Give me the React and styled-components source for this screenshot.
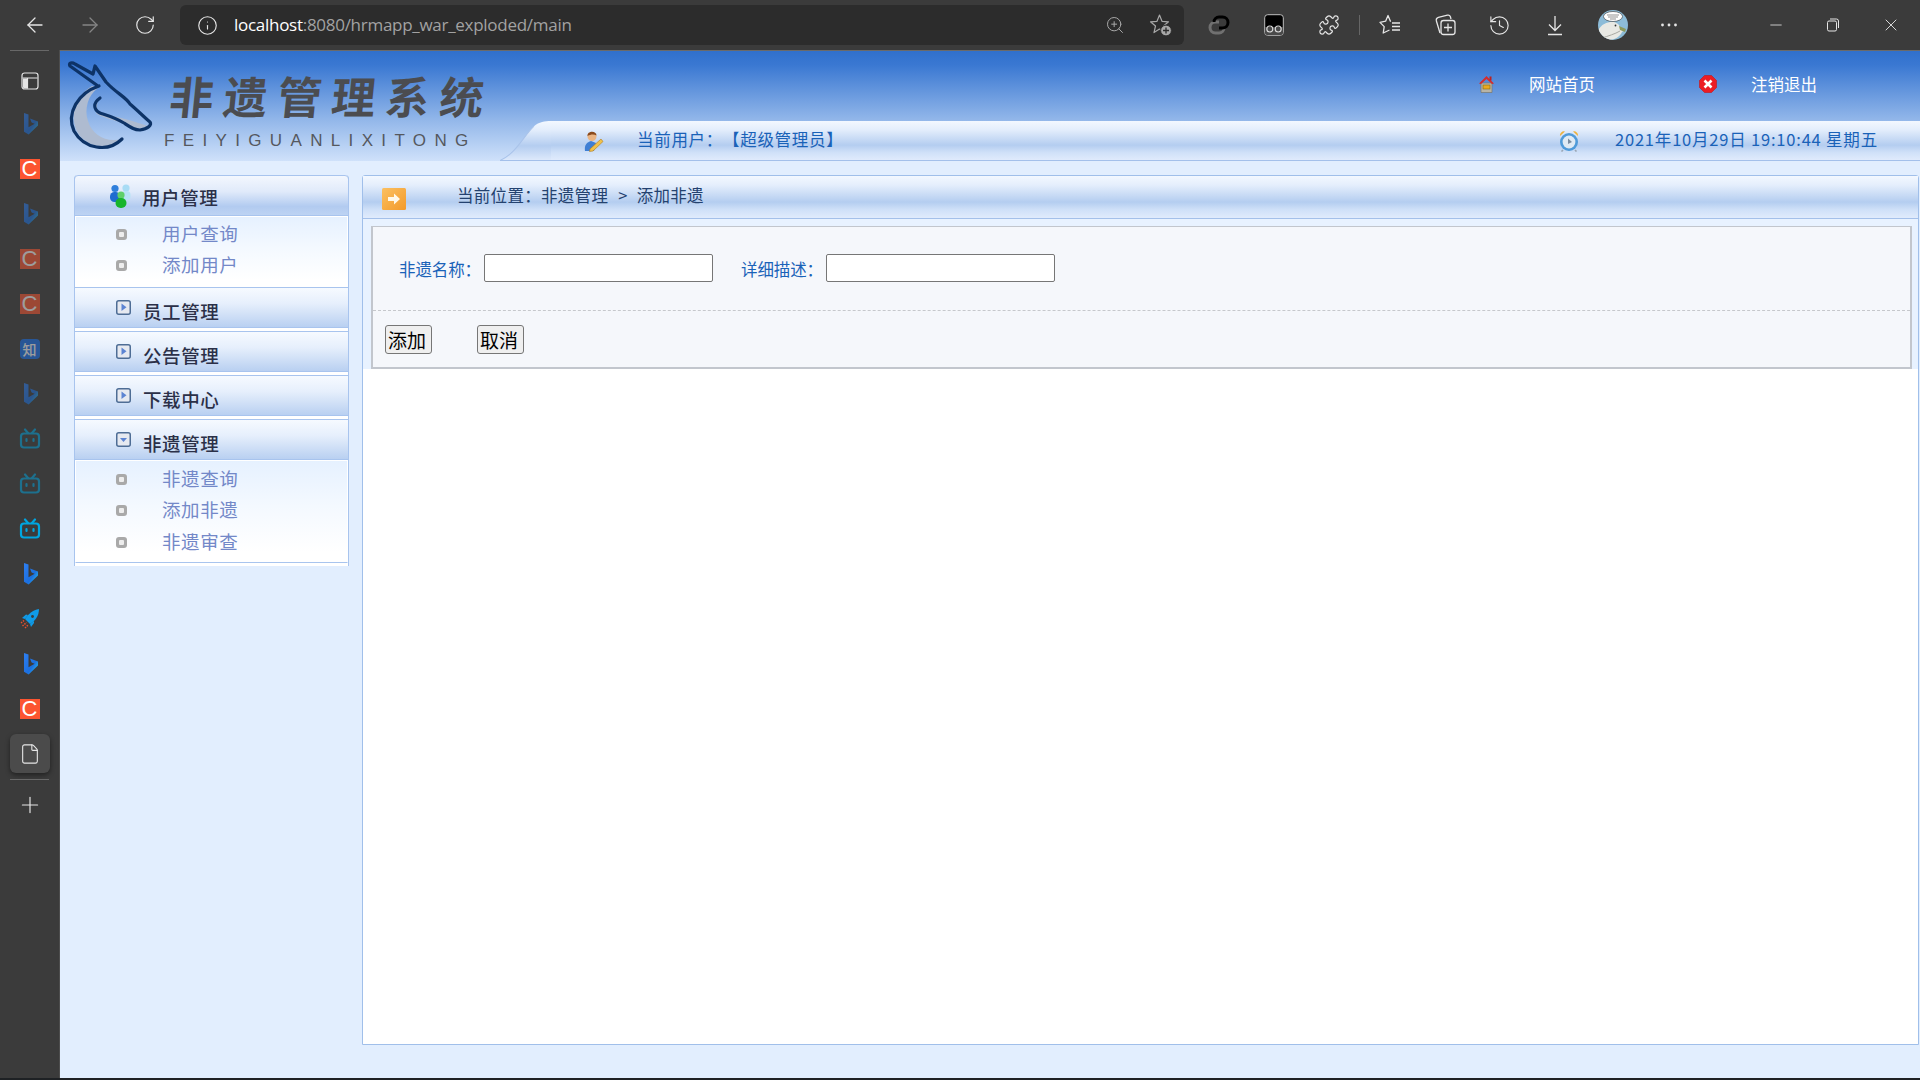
import React from 'react';
import styled, { createGlobalStyle } from 'styled-components';
import { ArrowLeft, ArrowRight, RotateCw, Info, ZoomIn, History, Minus, X, Plus, File, Puzzle } from 'lucide-react';

const Global = createGlobalStyle`
  html, body { margin: 0; padding: 0; background: #1e2124; }
  * { box-sizing: border-box; }
  #root { width: 1920px; height: 1080px; overflow: hidden; }
`;

const CJK = `"Noto Sans CJK SC", "Noto Sans", sans-serif`;
const bandGradient = `linear-gradient(#f3f8ff 0%, #e4eefc 22%, #b4cdf0 62%, #cfe0f8 80%, #e0ebfc 100%)`;

const Shell = styled.div`
  width: 1920px; height: 1080px; display: flex; flex-direction: column;
  background: #3b3b3b; font-family: ${CJK}; text-spacing-trim: space-all;
`;
const TopBar = styled.div`
  height: 50px; flex: none; display: flex; align-items: center; padding-left: 7px; color: #e8e8e8;
`;
const Slot = styled.div`
  flex: none; width: ${p => p.$w || 55}px; height: 40px; display: flex; align-items: center; justify-content: center;
  color: ${p => p.$dim ? '#858585' : '#e6e6e6'}; margin-left: ${p => p.$ml || 0}px;
`;
const AddressBar = styled.div`
  flex: none; width: 1004px; height: 40px; margin: 0 7px 0 8px; background: #2c2c2c; border-radius: 6px;
  display: flex; align-items: center; padding-left: 17px; color: #b5b5b5;
`;
const UrlText = styled.div`
  margin: 0 0 2px 16px; flex: 1; font: 17px "Open Sans", "Noto Sans", sans-serif; letter-spacing: -0.28px; color: #a2a2a2;
  b { font-weight: 400; color: #fff; }
`;
const AddrIcon = styled.div`
  flex: none; width: 46px; display: flex; justify-content: center; color: #a8a8a8;
`;
const ToolDivider = styled.div`
  flex: none; width: 1px; height: 20px; margin: 0 2px 0 3px; background: #666;
`;
const Below = styled.div`
  flex: 1; display: flex; min-height: 0;
`;
const Rail = styled.div`
  flex: none; width: 60px; display: flex; flex-direction: column; align-items: center;
  border-right: 1px solid #4d4d4d;
`;
const RailLine = styled.div`
  flex: none; width: 39px; height: 1px; background: #686868; margin-right: 1px;
`;
const RailItem = styled.div`
  flex: none; width: 40px; height: ${p => p.$active ? 39 : 45}px; display: flex; align-items: center; justify-content: center;
  margin-top: ${p => p.$active ? 3 : p.$last ? 2 : 0}px;
  margin-bottom: ${p => p.$first ? -2 : p.$active ? 6 : 0}px;
  opacity: ${p => p.$faded ? 0.5 : 1};
  color: #e6e6e6;
  border-radius: 6px;
  background: ${p => p.$active ? '#4b4b4b' : 'transparent'};
  box-shadow: ${p => p.$active ? '0 2px 5px rgba(0,0,0,.45)' : 'none'};
`;
const RailTop = styled.div`flex: none; height: 7px;`;
const CTile = styled.div`
  width: 20px; height: 20px; background: #fc5531; color: #fff; font: 400 22px/20px "Liberation Sans", sans-serif; text-align: center;
`;
const ZhiTile = styled.div`
  width: 20px; height: 20px; background: #1772f0; border-radius: 4px; color: #fff; font: 500 14px/20px ${CJK}; text-align: center;
`;
const Page = styled.div`
  flex: 1; display: flex; flex-direction: column; background: #e2eefe; border-top: 1px solid #6a6a6a; min-width: 0;
`;
const Banner = styled.div`
  flex: none; height: 110px; display: flex;
  background: linear-gradient(#3070cc 0, #3a78d2 14px, #94b8ea 70px, #cfe1fa 110px);
`;
const LogoArea = styled.div`
  flex: none; width: 440px; display: flex; padding-left: 2px;
`;
const LogoText = styled.div`
  display: flex; flex-direction: column; margin-top: 14px; margin-left: 2px;
`;
const LogoTitle = styled.div`
  font: 700 44px/60px ${CJK}; letter-spacing: 10px; color: #4b4c50; white-space: nowrap; padding-left: 6px;
  transform: skewX(-6deg);
`;
const LogoPinyin = styled.div`
  font: 400 17px/20px "Liberation Sans", sans-serif; letter-spacing: 8.35px; color: #55585e; margin-top: 6px; white-space: nowrap;
`;
const BannerRight = styled.div`
  flex: 1; display: flex; flex-direction: column; min-width: 0;
`;
const TopLinks = styled.div`
  flex: none; height: 70px; display: flex; align-items: center; padding: 0 0 4px 978px;
`;
const TopLink = styled.div`
  color: #fff; font-size: 16.5px; white-space: nowrap; flex: none; width: ${p => p.$w}px; margin-left: ${p => p.$ml}px;
`;
const BandRow = styled.div`
  flex: 1; display: flex; min-height: 0;
`;
const Band = styled.div`
  flex: 1; display: flex; align-items: center; background: ${bandGradient}; border-bottom: 1px solid #a4c0ea;
  color: #1a62b8; font-size: 16.5px; white-space: nowrap; padding-left: 31px;
`;
const BandText = styled.div`
  margin-left: ${p => p.$ml}px; flex: none; margin-top: -3px; width: ${p => p.$w ? `${p.$w}px` : 'auto'};
  letter-spacing: ${p => p.$ls || 0}px;
`;
const Body = styled.div`
  flex: 1; display: flex; padding: 14px 1px 33px 14px; gap: 13px; min-height: 0;
`;
const Menu = styled.div`
  flex: none; width: 275px; align-self: flex-start; background: #fff; padding-bottom: 3px;
  border: solid #a8c4ee; border-width: 0 1px 0 1px; border-radius: 4px 4px 0 0;
`;
const MenuHead = styled.div`
  height: ${p => p.$h || 41}px; margin: 0 -1px ${p => p.$gap || 0}px; padding-left: 41px; display: flex; align-items: center;
  border: 1px solid #a8c4ee; border-radius: ${p => p.$first ? '4px 4px 0 0' : '0'};
  background: ${p => p.$first ? 'linear-gradient(#f3f7fe 0%, #e0eafa 40%, #b2cbf0 78%, #bdd3f3 100%)' : 'linear-gradient(#f6faff 0%, #e6effc 40%, #b9d0f1 100%)'};
  font-size: 18.5px; letter-spacing: 0.6px; color: #2b3048; white-space: nowrap;
`;
const HeadLabel = styled.span`
  margin-left: ${p => p.$ml ?? 12}px; margin-top: ${p => p.$mt ?? 6}px; font-weight: 500;
`;
const HeadIcon = styled.div`
  flex: none; display: flex; margin-bottom: ${p => p.$mb ?? 1}px; margin-left: ${p => p.$mx || 0}px;
`;
const SubList = styled.div`
  padding: ${p => p.$closing ? '1px 0 5px 40px' : '0 0 7px 40px'};
  background: linear-gradient(#e6f1ff 0%, #f4f9ff 45%, #fff 90%);
  border: solid #fff; border-width: 1px 1px 0;
  ${p => p.$closing ? 'border-bottom: 1px solid #a8c4ee;' : ''}
`;
const SubItem = styled.div`
  height: 31.5px; display: flex; align-items: center; gap: 35px; color: #7388c8; font-size: 18.5px; letter-spacing: 0.6px;
`;
const Bullet = styled.span`
  flex: none; width: 11px; height: 11px; margin-top: 3px; border-radius: 3px; background: #a9a9a9; display: flex; align-items: center; justify-content: center;
  &::after { content: ''; width: 5px; height: 5px; background: #ededed; border-radius: 1px; }
`;
const Main = styled.div`
  flex: 1; min-width: 0; display: flex; flex-direction: column; background: #fff;
  border: 1px solid #a0bfea; border-radius: 3px 3px 0 0;
`;
const Crumb = styled.div`
  flex: none; height: 43px; display: flex; align-items: center; padding-left: 19px;
  background: ${bandGradient}; border-bottom: 1px solid #a4c0ea;
  color: #24426f; font-size: 16.5px; letter-spacing: .3px; white-space: nowrap;
`;
const CrumbText = styled.div`margin-left: 51px; margin-top: -4px;`;
const CrumbSep = styled.span`margin: 0 9px 0 10px;`;
const CrumbIcon = styled.div`flex: none; display: flex; margin-top: 4px;`;
const FormWrap = styled.div`
  flex: none; padding: 7px 6px 0 8px; background: #e8f2ff;
`;
const Form = styled.div`
  height: 143px; background: #f5f7fb; border: 2px solid #c2c6cd; border-width: 1px 2px 2px 2px; display: flex; flex-direction: column;
`;
const Fields = styled.div`
  flex: none; height: 84px; display: flex; align-items: center; border-bottom: 1px dashed #c6c8cc; padding: 0 0 1px 26px;
`;
const FieldLabel = styled.label`
  flex: none; width: 85px; color: #1a62b8; font-size: 16.5px; letter-spacing: -0.1px; white-space: nowrap; margin-top: 1px;
`;
const TextInput = styled.input`
  flex: none; width: 229px; height: 28px; background: #fff; border: 1px solid #767676; border-radius: 2px; margin-right: 28px; padding: 0;
`;
const Actions = styled.div`
  flex: 1; display: flex; align-items: flex-start; gap: 45px; padding: 14px 0 0 12px;
`;
const Btn = styled.button`
  flex: none; width: 47px; height: 29px; padding: 0 3px 0 0; background: #efefef; border: 1px solid #767676; border-radius: 3px;
  font: 400 19px/26px ${CJK}; color: #000;
`;
const BottomStrip = styled.div`
  flex: none; height: 2px; background: #1e2124;
`;

const Bing = () => (
  <svg width="20" height="24" viewBox="0 0 20 24">
    <defs>
      <linearGradient id="bing" x1="0" y1="0" x2="1" y2="1">
        <stop offset="0" stopColor="#2f7ff0" /><stop offset="0.6" stopColor="#1b6fe0" /><stop offset="1" stopColor="#2fd0e8" />
      </linearGradient>
    </defs>
    <path d="M4 1 L8.5 2.6 V15.2 L14.6 11.8 L11.6 10.4 L10 6.6 L18 9.4 V13.4 L8.6 22.6 L4 19.8 Z" fill="url(#bing)" />
  </svg>
);
const Bili = () => (
  <svg width="22" height="22" viewBox="0 0 22 22" fill="none" stroke="#00a6e0" strokeWidth="2.2">
    <rect x="2" y="5.5" width="18" height="14" rx="3" />
    <path d="M6 1.5 L9 5 M16 1.5 L13 5" strokeLinecap="round" />
    <path d="M7.5 11v2 M14.5 11v2" strokeLinecap="round" />
  </svg>
);
const Rocket = () => (
  <svg width="22" height="22" viewBox="0 0 22 22">
    <path d="M20 1 C14 2 9 6 6 11 L11 16 C16 13 20 8 20 1 Z" fill="#0f9be8" />
    <path d="M6 11 L3 10 L7 6.5 L9 7 Z M11 16 L12 19 L15 15 L15 13 Z" fill="#0f9be8" />
    <circle cx="13.5" cy="8.5" r="1.4" fill="#3b3b3b" />
    <path d="M2 15 L5 12.5 M3.5 18 L7.5 14.5 M6 20 L9 17" stroke="#e9502e" strokeWidth="1.4" strokeDasharray="1.5 1" />
  </svg>
);
const PanelIcon = () => (
  <svg width="18" height="18" viewBox="0 0 18 18">
    <rect x="1" y="1" width="16" height="16" rx="2.5" fill="#3b3b3b" stroke="#e6e6e6" strokeWidth="1.2" />
    <path d="M1.5 6h15 M6.5 6v10.5" stroke="#e6e6e6" strokeWidth="1.2" />
    <path d="M2 6.5h4.5v10H3.5A1.5 1.5 0 0 1 2 15Z" fill="#e6e6e6" />
  </svg>
);
const LinkBlob = () => (
  <svg width="22" height="22" viewBox="0 0 22 22" fill="none" strokeWidth="3">
    <path d="M11 8 H7.5 a5 5 0 0 0 0 11 h3.5 a5 5 0 0 0 5 -5" stroke="#707070" />
    <path d="M11 14 h3.5 a5 5 0 0 0 0 -11 h-3.5 a5 5 0 0 0 -5 5" stroke="#000" />
  </svg>
);
const Glasses = () => (
  <svg width="20" height="22" viewBox="0 0 20 22" fill="none">
    <rect x="0.7" y="0.7" width="18.6" height="20.6" rx="3" fill="#000" stroke="#bdbdbd" strokeWidth="1" />
    <path d="M1 13 H19 V18 a3 3 0 0 1 -3 3 H4 a3 3 0 0 1 -3 -3 Z" fill="#4a4a4a" />
    <circle cx="5.8" cy="15" r="3" stroke="#dcdcdc" strokeWidth="1.1" />
    <circle cx="14.2" cy="15" r="3" stroke="#dcdcdc" strokeWidth="1.1" />
  </svg>
);
const StarPlus = () => (
  <svg width="24" height="24" viewBox="0 0 24 24" fill="none" stroke="#a8a8a8" strokeWidth="1.2">
    <path d="M10.5 2 L13 8.3 L19.5 8.8 L14.6 13 L16 19.4 L10.5 16 L5 19.6 L6.5 13 L1.5 8.8 L8 8.3 Z" strokeLinejoin="round" />
    <circle cx="17" cy="17.5" r="5.4" fill="#a8a8a8" stroke="#2c2c2c" strokeWidth="1" />
    <path d="M17 14.5 v6 M14 17.5 h6" stroke="#2c2c2c" strokeWidth="1.3" />
  </svg>
);
const FavList = () => (
  <svg width="24" height="24" viewBox="0 0 24 24" fill="none" stroke="#e6e6e6" strokeWidth="1.3" strokeLinejoin="round">
    <path d="M13 8.2 L12.4 8.2 L10 2.5 L7.6 8.2 L2 9.4 L6.2 13.6 L5.2 20 L11.5 17" />
    <path d="M14 10 h8 M14 13.5 h8 M14 17 h8" />
  </svg>
);
const Collections = () => (
  <svg width="24" height="24" viewBox="0 0 24 24" fill="none" stroke="#e6e6e6" strokeWidth="1.3">
    <path d="M7 20 L3.4 8 a3 3 0 0 1 2 -3.6 l9 -2.2 a2.5 2.5 0 0 1 3 1.6 L18 6" />
    <rect x="8" y="7.5" width="14" height="14" rx="2.5" fill="#3b3b3b" />
    <path d="M15 10.5 v8 M11 14.5 h8" />
  </svg>
);
const DownloadIcon = () => (
  <svg width="20" height="24" viewBox="0 0 20 24" fill="none" stroke="#e6e6e6" strokeWidth="1.3">
    <path d="M10 3 v14 M4 11.5 L10 17.5 L16 11.5 M3 21.5 h14" />
  </svg>
);
const Dots = () => (
  <svg width="18" height="4" viewBox="0 0 18 4" fill="#e6e6e6">
    <circle cx="2.5" cy="2" r="1.4" /><circle cx="9" cy="2" r="1.4" /><circle cx="15.5" cy="2" r="1.4" />
  </svg>
);
const Restore = () => (
  <svg width="14" height="14" viewBox="0 0 14 14" fill="none" stroke="#e6e6e6" strokeWidth="1">
    <rect x="1.5" y="3" width="9" height="10" rx="1.5" />
    <path d="M4 1 h6.5 a2 2 0 0 1 2 2 v7" />
  </svg>
);
const Avatar = () => (
  <svg width="30" height="30" viewBox="0 0 30 30">
    <defs><clipPath id="av"><ellipse cx="15" cy="15" rx="15" ry="15" /></clipPath></defs>
    <g clipPath="url(#av)">
      <rect width="30" height="30" fill="#8dbcd8" />
      <path d="M0 30 V21 C3 14 9 12 14 12 C18 12 21 14 22 17 L27 20 L24 22 C22 27 15 31 8 30 Z" fill="#e9e9e4" />
      <path d="M21 16 L28 19 L27 22 L22 20 Z" fill="#8c9a5c" />
      <path d="M4 28 C10 26 17 24 22 21" stroke="#a9a9a2" strokeWidth="1" fill="none" />
      <ellipse cx="15" cy="6.5" rx="9.5" ry="5" fill="#fff" stroke="#333" strokeWidth=".6" />
      <path d="M9 5h12 M10 7h10 M12 9h6" stroke="#666" strokeWidth=".7" />
      <circle cx="17.5" cy="15.5" r=".9" fill="#333" />
    </g>
  </svg>
);
const LogoMark = () => (
  <svg width="100" height="109" viewBox="0 0 100 109" fill="none" style={{ flex: 'none' }}>
    <path d="M30 35 C12 46 6 68 18 85 C30 98 48 98 60 88 C44 92 30 84 26 70 C22 58 26 44 36 37 Z" fill="#aebbd0" />
    <path d="M36 47 C30 55 34 62 44 64 C58 66 74 71 86 75 C76 79 70 78 60 72 C48 68 38 66 34 62" fill="#aebbd0" />
    <path d="M37 35 C16 42 4 62 12 80 C22 98 46 102 60 88 M36 35 L8 15 C6 12 10 11 13 13 L31 23 L33 15 L44 31 C54 42 64 46 68 53 C74 58 82 66 88 71 C90 74 86 78 78 79 C72 79 68 76 62 72 C52 66 44 64 38 62 C31 58 31 52 38 47"
      stroke="#0d3367" strokeWidth="3.2" strokeLinejoin="round" strokeLinecap="round" />
  </svg>
);
const HomeIcon = () => (
  <svg width="17" height="18" viewBox="0 0 17 18">
    <path d="M3 8 H14 V17.5 H3 Z" fill="#b8b4a6" stroke="#77776f" strokeWidth=".7" />
    <path d="M8.5 1 L16 8.5 L14 9 L8.5 4 L3 9 L1 8.5 Z" fill="#d62b2b" />
    <rect x="11.5" y="1.5" width="2" height="4" fill="#b22" />
    <rect x="5" y="10" width="7" height="4" fill="#e9a920" stroke="#8a6a10" strokeWidth=".6" />
  </svg>
);
const CloseIcon = () => (
  <svg width="18" height="18" viewBox="0 0 18 18">
    <path d="M5.5 0.5 H12.5 L17.5 5.5 V12.5 L12.5 17.5 H5.5 L0.5 12.5 V5.5 Z" fill="#ec1c24" stroke="#c4141a" strokeWidth=".6" />
    <path d="M5.5 5.5 L12.5 12.5 M12.5 5.5 L5.5 12.5" stroke="#fff" strokeWidth="2.6" />
  </svg>
);
const ClockIcon = () => (
  <svg width="20" height="22" viewBox="0 0 20 22">
    <path d="M1 6 A4 4 0 0 1 6 1.5 Z M19 6 A4 4 0 0 0 14 1.5 Z" fill="#eeb13a" />
    <path d="M4 20 l-1.5 1.5 M16 20 l1.5 1.5" stroke="#9aa7b5" strokeWidth="1.6" />
    <circle cx="10" cy="12" r="9" fill="#4f9ad9" />
    <circle cx="10" cy="12" r="6.4" fill="#dfeaf4" />
    <path d="M9 8.5 L13 12 L9 14 Z" fill="#7a8ca0" />
  </svg>
);
const UserPen = () => (
  <svg width="22" height="22" viewBox="0 0 22 22">
    <path d="M3 21 C2 15 5 12 9 11 L14 13 L12 21 Z" fill="#3f7fd4" />
    <circle cx="10" cy="6.5" r="4.5" fill="#eab483" />
    <path d="M5.5 6 C5 1 14 0 14.6 5.5 C12 4 9 4 5.5 6 Z" fill="#8a4a1d" />
    <path d="M8 19 L19 9 L21 11.5 L11 21 L7.5 21.5 Z" fill="#f0c24a" stroke="#b27a20" strokeWidth=".6" />
  </svg>
);
const UsersIcon = () => (
  <svg width="23" height="26" viewBox="0 0 23 26">
    <circle cx="17" cy="5" r="3.6" fill="#a8dcf5" /><rect x="12.5" y="8" width="9" height="9" rx="4" fill="#b7e3f6" />
    <circle cx="6" cy="5.5" r="3.6" fill="#2f7fdc" /><rect x="1" y="9" width="10" height="10" rx="4.5" fill="#1f6cd0" />
    <circle cx="12" cy="12" r="3.6" fill="#5fd06a" /><rect x="6.5" y="15" width="11" height="10" rx="5" fill="#17b52c" />
  </svg>
);
const SquareToggle = ({ open }) => (
  <svg width="15" height="15" viewBox="0 0 15 15">
    <rect x=".75" y=".75" width="13.5" height="13.5" rx="2" fill="#e6e9f0" stroke="#4e6d95" strokeWidth="1.5" />
    {open ? <path d="M4 6 H11 L7.5 10 Z" fill="#5d84d2" /> : <path d="M5.5 3.5 V11 L10.5 7.2 Z" fill="#5d84d2" />}
  </svg>
);
const ArrowTile = () => (
  <svg width="24" height="22" viewBox="0 0 24 22">
    <defs><linearGradient id="org" x1="0" y1="0" x2="1" y2="1"><stop offset="0" stopColor="#fbc062" /><stop offset="1" stopColor="#f39a2a" /></linearGradient></defs>
    <rect width="24" height="22" rx="1.5" fill="url(#org)" />
    <path d="M6 9 H12 V5.5 L18 11 L12 16.5 V13 H6 Z" fill="#fff8e8" />
  </svg>
);
const BandCap = () => (
  <svg width="51" height="40" viewBox="0 0 51 39" preserveAspectRatio="none" style={{ flex: 'none', display: 'block' }}>
    <defs>
      <linearGradient id="cap" x1="0" y1="0" x2="0" y2="1">
        <stop offset="0" stopColor="#f3f8ff" /><stop offset=".22" stopColor="#e4eefc" /><stop offset=".62" stopColor="#b4cdf0" /><stop offset="1" stopColor="#e0ebfc" />
      </linearGradient>
    </defs>
    <path d="M0 39 C16 32 24 14 34 5 C39 1 45 0 51 0 V39 Z" fill="url(#cap)" />
    <path d="M0 38.5 C16 32 24 14 34 5" stroke="#a9c3ea" strokeWidth="1" fill="none" />
    <path d="M0 38.5 H51" stroke="#a4c0ea" strokeWidth="1" />
  </svg>
);

const railRows = [
  { k: 'p', el: <PanelIcon />, first: true },
  { k: 'b1', el: <Bing />, faded: true },
  { k: 'c1', el: <CTile>C</CTile> },
  { k: 'b2', el: <Bing />, faded: true },
  { k: 'c2', el: <CTile>C</CTile>, faded: true },
  { k: 'c3', el: <CTile>C</CTile>, faded: true },
  { k: 'z', el: <ZhiTile>知</ZhiTile>, faded: true },
  { k: 'b3', el: <Bing />, faded: true },
  { k: 'v1', el: <Bili />, faded: true },
  { k: 'v2', el: <Bili />, faded: true },
  { k: 'v3', el: <Bili /> },
  { k: 'b4', el: <Bing /> },
  { k: 'r', el: <Rocket /> },
  { k: 'b5', el: <Bing /> },
  { k: 'c4', el: <CTile>C</CTile> },
];

export default function App() {
  return (
    <>
      <Global />
      <Shell>
        <TopBar>
          <Slot><ArrowLeft size={24} strokeWidth={1.3} /></Slot>
          <Slot $dim><ArrowRight size={24} strokeWidth={1.3} /></Slot>
          <Slot><RotateCw size={22} strokeWidth={1.3} /></Slot>
          <AddressBar>
            <Info size={21} strokeWidth={1.3} color="#e6e6e6" />
            <UrlText><b>localhost</b>:8080/hrmapp_war_exploded/main</UrlText>
            <AddrIcon><ZoomIn size={20} strokeWidth={1.2} /></AddrIcon>
            <AddrIcon><StarPlus /></AddrIcon>
          </AddressBar>
          <Slot><LinkBlob /></Slot>
          <Slot><Glasses /></Slot>
          <Slot><Puzzle size={22} strokeWidth={1.3} /></Slot>
          <ToolDivider />
          <Slot><FavList /></Slot>
          <Slot><Collections /></Slot>
          <Slot><History size={23} strokeWidth={1.2} /></Slot>
          <Slot><DownloadIcon /></Slot>
          <Slot $w={30} $ml={16}><Avatar /></Slot>
          <Slot $ml={13}><Dots /></Slot>
          <Slot $ml={52}><Minus size={18} strokeWidth={1.1} /></Slot>
          <Slot $w={59}><Restore /></Slot>
          <Slot $w={57}><X size={20} strokeWidth={1.1} /></Slot>
        </TopBar>
        <Below>
          <Rail>
            <RailLine />
            <RailTop />
            {railRows.map(r => (
              <RailItem key={r.k} $faded={r.faded} $first={r.first}>{r.el}</RailItem>
            ))}
            <RailItem $active><File size={22} strokeWidth={1.2} /></RailItem>
            <RailLine />
            <RailItem $last><Plus size={26} strokeWidth={1.1} /></RailItem>
          </Rail>
          <Page>
            <Banner>
              <LogoArea>
                <LogoMark />
                <LogoText>
                  <LogoTitle>非遗管理系统</LogoTitle>
                  <LogoPinyin>FEIYIGUANLIXITONG</LogoPinyin>
                </LogoText>
              </LogoArea>
              <BannerRight>
                <TopLinks>
                  <HomeIcon />
                  <TopLink $w={170} $ml={34}>网站首页</TopLink>
                  <CloseIcon />
                  <TopLink $w={70} $ml={34}>注销退出</TopLink>
                </TopLinks>
                <BandRow>
                  <BandCap />
                  <Band>
                    <UserPen />
                    <BandText $ml={33} $w={922} $ls={0.7}>当前用户：【超级管理员】</BandText>
                    <ClockIcon />
                    <BandText $ml={36} $ls={0.8}>2021年10月29日 19:10:44 星期五</BandText>
                  </Band>
                </BandRow>
              </BannerRight>
            </Banner>
            <Body>
              <Menu>
                <MenuHead $first>
                  <HeadIcon $mx={-7} $mb={0}><UsersIcon /></HeadIcon>
                  <HeadLabel $ml={10} $mt={3}>用户管理</HeadLabel>
                </MenuHead>
                <SubList>
                  <SubItem><Bullet />用户查询</SubItem>
                  <SubItem><Bullet />添加用户</SubItem>
                </SubList>
                <MenuHead $gap={3}>
                  <HeadIcon><SquareToggle /></HeadIcon>
                  <HeadLabel>员工管理</HeadLabel>
                </MenuHead>
                <MenuHead $gap={3}>
                  <HeadIcon><SquareToggle /></HeadIcon>
                  <HeadLabel>公告管理</HeadLabel>
                </MenuHead>
                <MenuHead $gap={3}>
                  <HeadIcon><SquareToggle /></HeadIcon>
                  <HeadLabel>下载中心</HeadLabel>
                </MenuHead>
                <MenuHead>
                  <HeadIcon><SquareToggle open /></HeadIcon>
                  <HeadLabel>非遗管理</HeadLabel>
                </MenuHead>
                <SubList $closing>
                  <SubItem><Bullet />非遗查询</SubItem>
                  <SubItem><Bullet />添加非遗</SubItem>
                  <SubItem><Bullet />非遗审查</SubItem>
                </SubList>
              </Menu>
              <Main>
                <Crumb>
                  <CrumbIcon><ArrowTile /></CrumbIcon>
                  <CrumbText>当前位置：非遗管理<CrumbSep>&gt;</CrumbSep>添加非遗</CrumbText>
                </Crumb>
                <FormWrap>
                  <Form>
                    <Fields>
                      <FieldLabel>非遗名称：</FieldLabel>
                      <TextInput />
                      <FieldLabel>详细描述：</FieldLabel>
                      <TextInput />
                    </Fields>
                    <Actions>
                      <Btn>添加</Btn>
                      <Btn>取消</Btn>
                    </Actions>
                  </Form>
                </FormWrap>
              </Main>
            </Body>
          </Page>
        </Below>
        <BottomStrip />
      </Shell>
    </>
  );
}
